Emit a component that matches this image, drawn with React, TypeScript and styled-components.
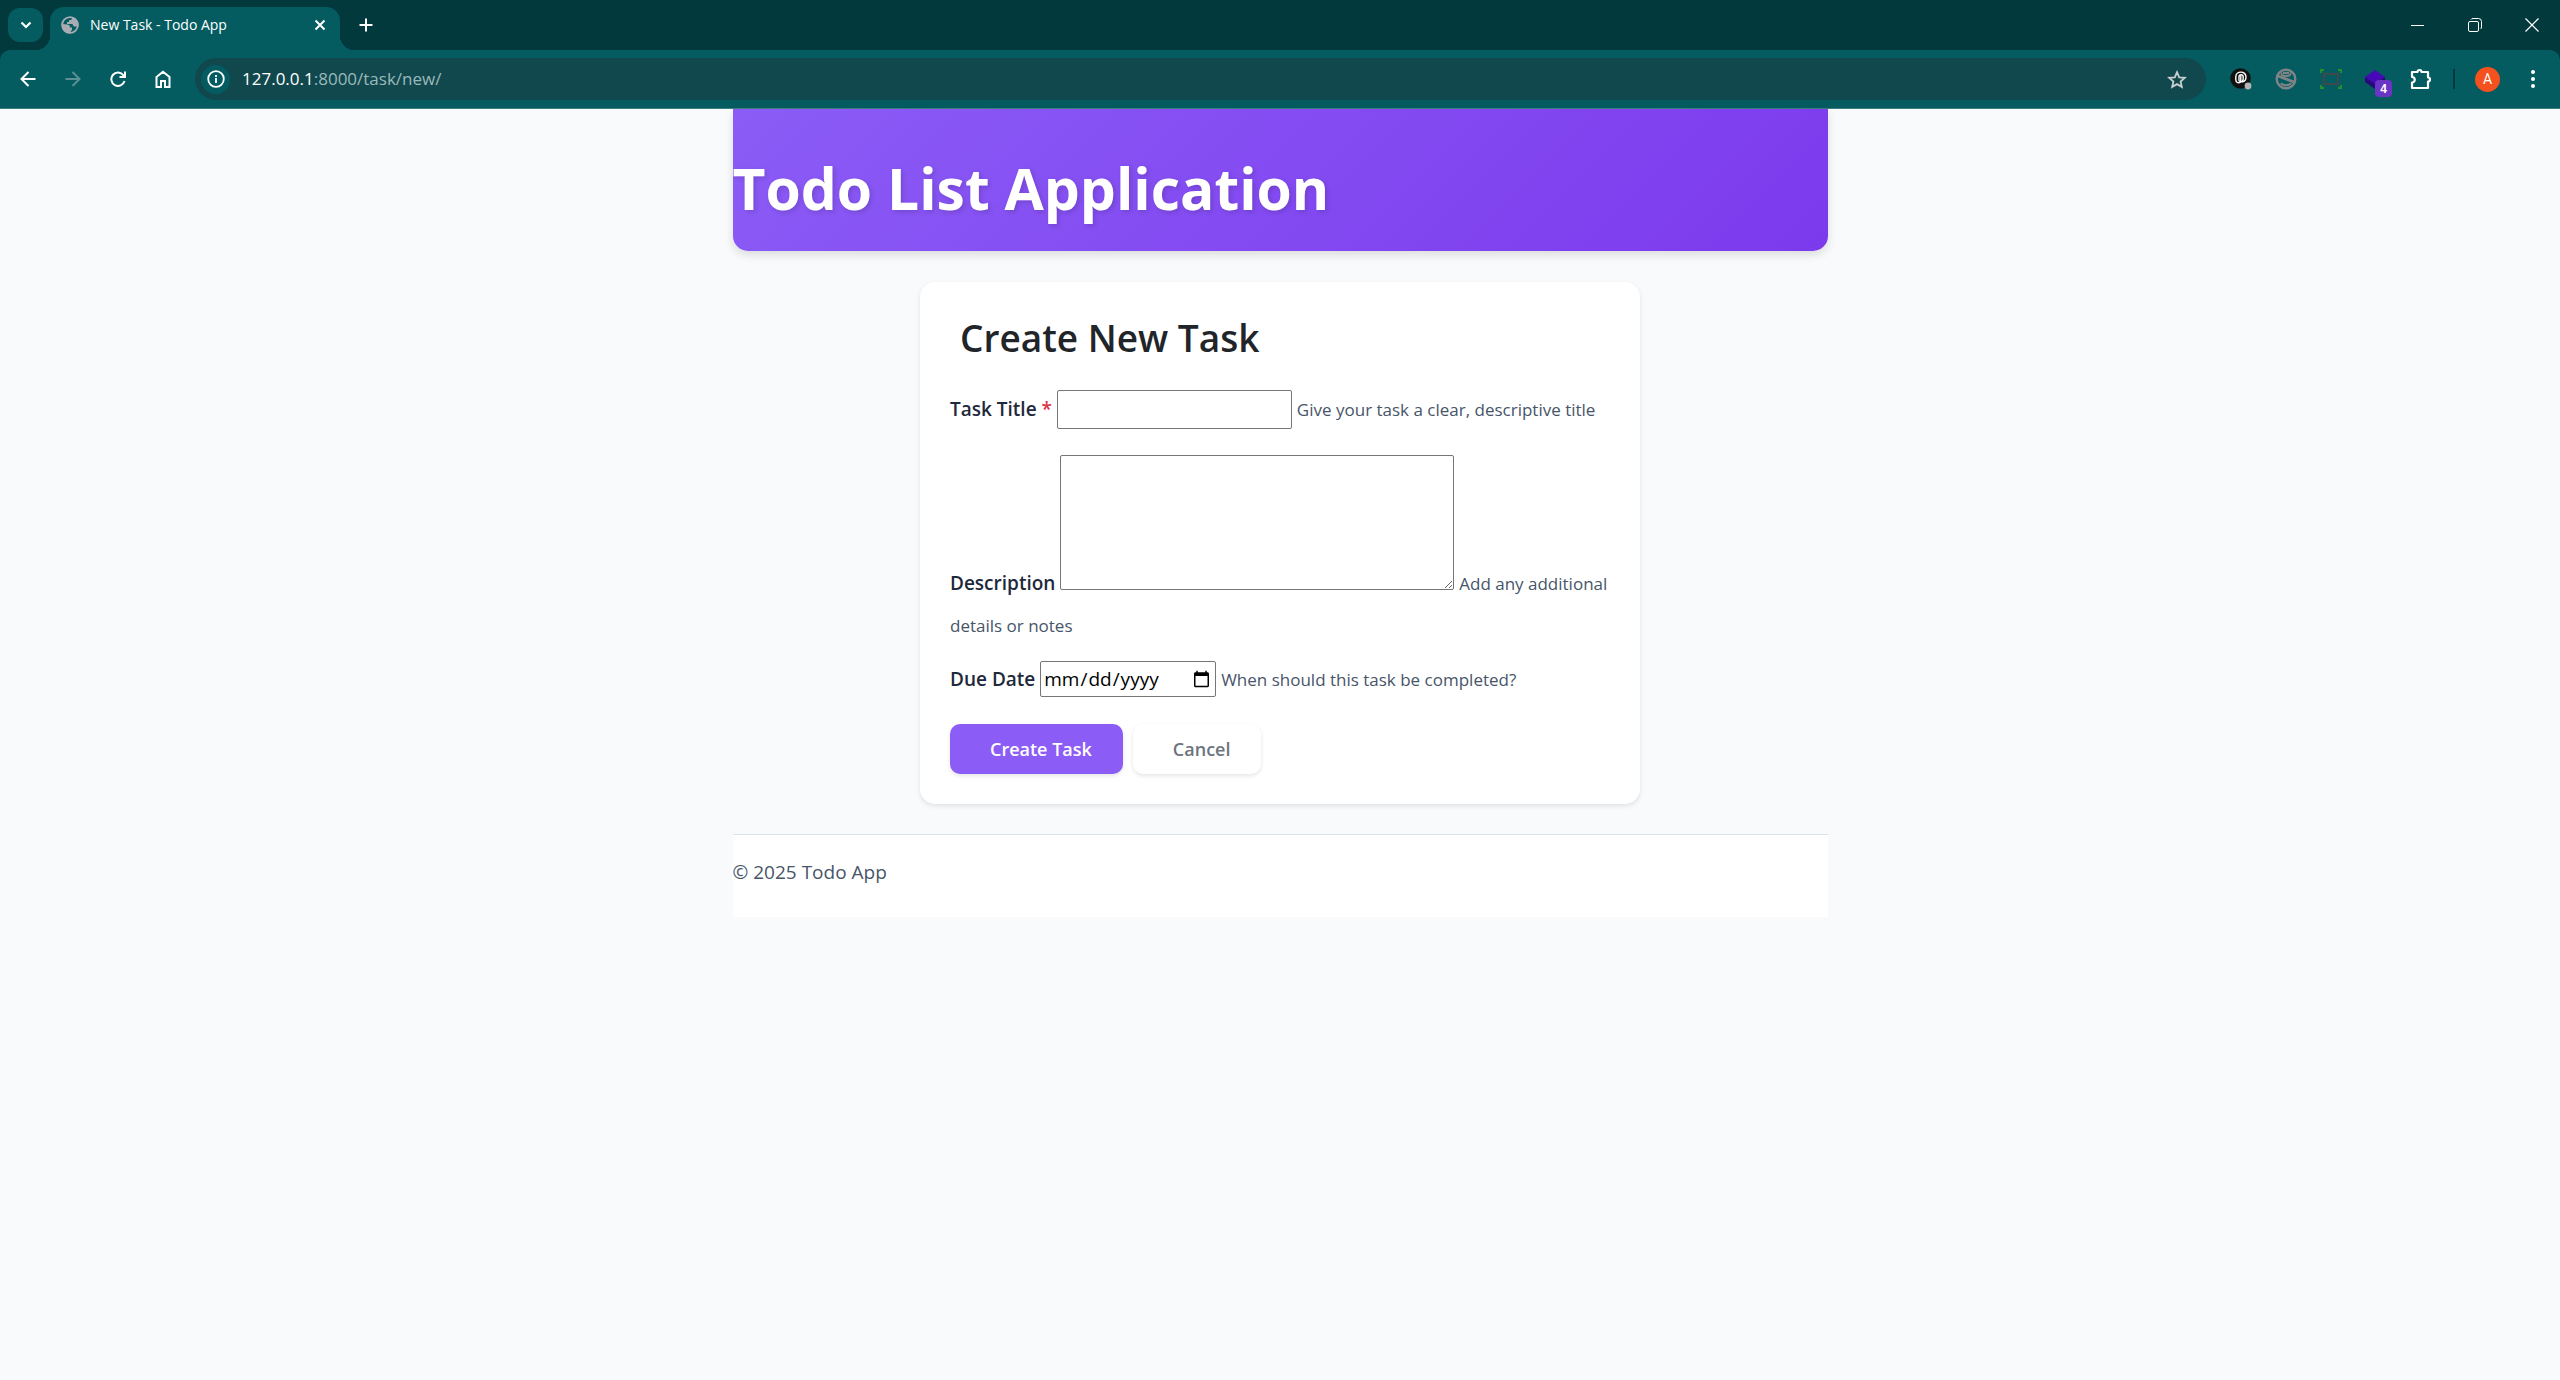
import React from "react";
import styled, { createGlobalStyle } from "styled-components";

const ui = '"Open Sans", "Noto Sans", sans-serif';

const GlobalStyle = createGlobalStyle`
  *, *::before, *::after { box-sizing: border-box; }
  body {
    margin: 0;
    background: #f8fafc;
    color: #212529;
    font-family: ${ui};
    font-size: 19px;
    line-height: 30px;
  }
`;

const TabStrip = styled.div`
  display: flex;
  align-items: center;
  height: 50px;
  padding: 0 0 0 8px;
  background: #01393d;
  color: #fff;
`;

const StripButton = styled.button<{ $filled?: boolean; $w?: number }>`
  display: grid;
  place-items: center;
  width: ${(p) => p.$w ?? 35}px;
  height: 34px;
  padding: 0;
  border: 0;
  border-radius: 12px;
  background: ${(p) => (p.$filled ? "#045c61" : "transparent")};
  color: inherit;
`;

const Tab = styled.div`
  position: relative;
  display: flex;
  align-items: center;
  gap: 11px;
  align-self: flex-end;
  width: 290px;
  height: 43px;
  margin: 0 8px 0 7px;
  padding: 0 8px 7px 11px;
  border-radius: 14px 14px 0 0;
  background: #045c61;
  font-size: 14px;
  line-height: 20px;
  &::before, &::after {
    content: "";
    position: absolute;
    bottom: 0;
    width: 14px;
    height: 14px;
  }
  &::before {
    right: 100%;
    background: radial-gradient(circle at 0 0, transparent 14px, #045c61 14px);
  }
  &::after {
    left: 100%;
    background: radial-gradient(circle at 100% 0, transparent 14px, #045c61 14px);
  }
`;

const TabTitle = styled.span`
  flex: 1;
`;

const CloseTab = styled(StripButton)`
  width: 25px;
  height: 25px;
`;

const Spacer = styled.div`
  flex: 1;
`;

const ToolbarBack = styled.div`
  background: #01393d;
`;

const Toolbar = styled.div`
  display: flex;
  align-items: center;
  height: 59px;
  padding: 0 5px;
  border-bottom: 1px solid #3c7f83;
  border-radius: 10px 10px 0 0;
  background: #045c61;
  color: #fff;
`;

const ToolButton = styled.button<{ $dim?: boolean }>`
  position: relative;
  display: grid;
  place-items: center;
  flex: none;
  width: 45px;
  height: 40px;
  padding: 0;
  border: 0;
  background: transparent;
  color: ${(p) => (p.$dim ? "#5a9093" : "#fff")};
`;

const AddressBar = styled.div`
  display: flex;
  align-items: center;
  flex: 1;
  height: 42px;
  margin: 0 12px 0 10px;
  padding: 0 7px 0 6px;
  border-radius: 21px;
  background: #10484e;
`;

const InfoButton = styled.button`
  display: grid;
  place-items: center;
  width: 29px;
  height: 29px;
  margin-right: 12px;
  padding: 0;
  border: 0;
  border-radius: 50%;
  background: #045c61;
  color: #fff;
`;

const Url = styled.div`
  flex: 1;
  color: #9bb9bb;
  font-size: 17px;
  line-height: 24px;
`;

const Host = styled.span`
  color: #fff;
`;

const StarButton = styled(ToolButton)`
  color: #c8cfd0;
`;

const Count = styled.span`
  position: absolute;
  right: 6px;
  bottom: 2px;
  display: grid;
  place-items: center;
  width: 17px;
  height: 17px;
  border-radius: 4px;
  background: #6a35c4;
  color: #fff;
  font-size: 12px;
  font-weight: 700;
  line-height: 16px;
`;

const Divider = styled.div`
  width: 2px;
  height: 20px;
  margin: 0 10px;
  background: #01393d;
`;

const Avatar = styled.span`
  display: grid;
  place-items: center;
  width: 25px;
  height: 25px;
  border-radius: 50%;
  background: #f4511e;
  color: #fff;
  font-family: Roboto, sans-serif;
  font-size: 14px;
  line-height: 20px;
`;

const Page = styled.div`
  max-width: 1095px;
  margin: 0 auto;
`;

const Header = styled.header`
  padding: 43px 0 27px;
  border-radius: 0 0 15px 15px;
  background: linear-gradient(135deg, #8b5cf6 0%, #7c3aed 100%);
  box-shadow: 0 4px 10px rgba(0, 0, 0, 0.12);
`;

const SiteTitle = styled.h1`
  margin: 0;
  color: #fff;
  font-size: 57px;
  font-weight: 700;
  line-height: 72px;
  text-shadow: 2px 2px 5px rgba(0, 0, 0, 0.15);
`;

const Card = styled.main`
  max-width: 720px;
  margin: 31px auto 30px;
  padding: 30px;
  border-radius: 15px;
  background: #fff;
  box-shadow: 0 2px 5px rgba(0, 0, 0, 0.1);
`;

const CardTitle = styled.h2`
  margin: 0 0 24px;
  padding-left: 10px;
  font-size: 37px;
  font-weight: 600;
  line-height: 52px;
`;

const Field = styled.div`
  margin-bottom: 12px;
  line-height: 42px;
`;

const Label = styled.label`
  color: #1e293b;
  font-weight: 600;
  line-height: 30px;
`;

const Required = styled.span`
  color: #dc3545;
`;

const Help = styled.small`
  color: #475569;
  font-size: 17px;
  line-height: 30px;
`;

const TextInput = styled.input`
  width: 235px;
  height: 39px;
  border: 1px solid #767676;
  border-radius: 2px;
  font: inherit;
`;

const DateInput = styled.input`
  width: 176px;
  height: 36px;
  padding: 1px 2px;
  border: 1px solid #767676;
  border-radius: 2px;
  background: #fff;
  color: #000;
  font: inherit;
  line-height: 30px;
`;

const TextArea = styled.textarea`
  width: 394px;
  height: 135px;
  margin: 13px 0 0;
  border: 1px solid #767676;
  border-radius: 2px;
  font: inherit;
  vertical-align: baseline;
`;

const Actions = styled.div`
  display: flex;
  gap: 10px;
  padding-top: 12px;
`;

const ActionButton = styled.button<{ $primary?: boolean }>`
  height: 50px;
  padding: 0 31px 0 40px;
  border: 0;
  border-radius: 10px;
  background: ${(p) => (p.$primary ? "#8b5cf6" : "#fff")};
  box-shadow: 0 2px 4px rgba(0, 0, 0, 0.1);
  color: ${(p) => (p.$primary ? "#fff" : "#6c757d")};
  font-family: inherit;
  font-size: 18px;
  font-weight: 600;
  line-height: 30px;
`;

const Footer = styled.footer`
  padding: 22px 0 30px;
  border-top: 1px solid #dee2e6;
  background: #fff;
  color: #475569;
`;

const line = { fill: "none", stroke: "currentColor" } as const;

export default function App() {
  return (
    <>
      <GlobalStyle />
      <TabStrip>
        <StripButton $filled aria-label="Search tabs">
          <svg width="12" height="8" viewBox="0 0 12 8" {...line} strokeWidth="2.2"><path d="M1.500 1.500 6 6l4.500-4.500" /></svg>
        </StripButton>
        <Tab>
          <svg width="18" height="18" viewBox="0 0 18 18">
            <circle cx="9" cy="9" r="7.900" fill="#045c61" stroke="#a9adb3" strokeWidth="1.800" />
            <path d="M1 8 6.500 8.500C8.500 8.800 9 10 9 11.500h2V14c-1 .5-1.500 1.500-2 3.500C4 17.500 0 13.500 1 8ZM11 1c.5 2.500-.5 3.200-3 3.200V6H6v2h5c1 0 1 2 2 2.500h4.500C18 5.500 15 1.800 11 1Z" fill="#a9adb3" />
          </svg>
          <TabTitle>New Task - Todo App</TabTitle>
          <CloseTab aria-label="Close tab">
            <svg width="12" height="12" viewBox="0 0 12 12" {...line} strokeWidth="2"><path d="m1.500 1.500 9 9m0-9-9 9" /></svg>
          </CloseTab>
        </Tab>
        <StripButton aria-label="New tab">
          <svg width="14" height="14" viewBox="0 0 14 14" {...line} strokeWidth="2"><path d="M7 .5v13M.5 7h13" /></svg>
        </StripButton>
        <Spacer />
        <StripButton $w={57} aria-label="Minimize">
          <svg width="13" height="13" viewBox="0 0 13 13" {...line}><path d="M0 6.500h13" /></svg>
        </StripButton>
        <StripButton $w={57} aria-label="Restore">
          <svg width="14" height="14" viewBox="0 0 14 14" {...line}><rect x=".5" y="3.500" width="10" height="10" rx="1.500" /><path d="M3 1.500Q3.500.5 5 .5h5.500q3 0 3 3V9q0 1.500-1 2" /></svg>
        </StripButton>
        <StripButton $w={57} aria-label="Close">
          <svg width="14" height="14" viewBox="0 0 14 14" {...line} strokeWidth="1.200"><path d="m.5.5 13 13m0-13-13 13" /></svg>
        </StripButton>
      </TabStrip>
      <ToolbarBack>
        <Toolbar>
          <ToolButton aria-label="Back">
            <svg width="16" height="16" viewBox="0 0 16 16" {...line} strokeWidth="2"><path d="M15.500 8H2M8.500 1 1.500 8l7 7" /></svg>
          </ToolButton>
          <ToolButton $dim aria-label="Forward">
            <svg width="16" height="16" viewBox="0 0 16 16" {...line} strokeWidth="2"><path d="M.5 8H14M7.500 1l7 7-7 7" /></svg>
          </ToolButton>
          <ToolButton aria-label="Reload">
            <svg width="16" height="16" viewBox="0 0 16 16" {...line} strokeWidth="2"><path d="M14.500 10A6.700 6.700 0 1 1 13.500 4.300l1 1.200M15 .5V6H9.500" /></svg>
          </ToolButton>
          <ToolButton aria-label="Home">
            <svg width="16" height="18" viewBox="0 0 16 18" {...line} strokeWidth="2"><path d="M1.500 7 8 1.800 14.500 7v10H10v-6H6v6H1.500Z" /></svg>
          </ToolButton>
          <AddressBar>
            <InfoButton aria-label="Site information">
              <svg width="18" height="18" viewBox="0 0 18 18" {...line} strokeWidth="1.800"><circle cx="9" cy="9" r="7.800" /><path d="M9 8v5M9 5v2" /></svg>
            </InfoButton>
            <Url><Host>127.0.0.1</Host>:8000/task/new/</Url>
            <StarButton aria-label="Bookmark this page">
              <svg width="20" height="19" viewBox="0 0 20 19" {...line} strokeWidth="1.800"><path d="m10 2.200 2.200 5.100 5.600.5-4.200 3.700 1.200 5.400L10 14.100l-4.800 2.800 1.200-5.400-4.200-3.700 5.600-.5Z" /></svg>
            </StarButton>
          </AddressBar>
          <ToolButton aria-label="Pinned extension">
            <svg width="22" height="22" viewBox="0 0 22 22">
              <circle cx="10.500" cy="10.500" r="10.300" fill="#111" />
              <path d="M10.800 8.500v3.700c0 1.300-1.800 1.300-1.800 0V9c0-3 4.200-3 4.200 0v1.500c0 4-7.400 6.500-7.400 1V9c0-6.500 10.200-6.500 10.200 0 0 3-1.500 4.500-3.500 4.800" fill="none" stroke="#fff" strokeWidth="1.400" strokeLinecap="round" />
              <circle cx="18" cy="18" r="3.400" fill="#b4b4b4" />
            </svg>
          </ToolButton>
          <ToolButton aria-label="Script blocker">
            <svg width="22" height="22" viewBox="0 0 22 22" fill="none" stroke="#808486">
              <circle cx="11" cy="11" r="9.300" strokeWidth="2.400" />
              <path d="M3 8 19 14" strokeWidth="2.800" />
              <path d="M6.500 4.500c-.5 3 1.500 3.500 4.500 3.500s5-.5 4.500-3.500M8 5h6M6 15c1.500 3 8.500 3 10 0" strokeWidth="1.800" />
            </svg>
          </ToolButton>
          <ToolButton aria-label="Window resizer">
            <svg width="22" height="20" viewBox="0 0 22 20" fill="none">
              <path d="M1 4V1h3M18 1h3v3M21 16v3h-3M4 19H1v-3" stroke="#2f8f2d" strokeWidth="1.800" />
              <rect x="4" y="5" width="14" height="10" stroke="#40484a" strokeWidth="2" />
            </svg>
          </ToolButton>
          <ToolButton aria-label="Layers, 4 items">
            <svg width="22" height="20" viewBox="0 0 22 20"><path d="M0 8v5l10 7 10-7V8Z" fill="#250a78" /><path d="M0 8 10 1l10 7-10 7Z" fill="#4709b5" /></svg>
            <Count>4</Count>
          </ToolButton>
          <ToolButton aria-label="Extensions">
            <svg width="22" height="22" viewBox="0 0 22 22" {...line} strokeWidth="2.200"><path d="M2 4h5.500a2 2 0 0 1 4 0H18v5.500a2 2 0 0 1 0 4V20H2v-5.500a2.700 2.700 0 0 0 0-5.500Z" strokeLinejoin="round" /></svg>
          </ToolButton>
          <Divider />
          <ToolButton aria-label="Profile"><Avatar>A</Avatar></ToolButton>
          <ToolButton aria-label="Menu">
            <svg width="4" height="18" viewBox="0 0 4 18" fill="#fff"><circle cx="2" cy="2" r="2" /><circle cx="2" cy="9" r="2" /><circle cx="2" cy="16" r="2" /></svg>
          </ToolButton>
        </Toolbar>
      </ToolbarBack>
      <Page>
        <Header><SiteTitle>Todo List Application</SiteTitle></Header>
        <Card>
          <CardTitle>Create New Task</CardTitle>
          <form>
            <Field>
              <Label htmlFor="title">Task Title <Required>*</Required></Label>{" "}
              <TextInput id="title" type="text" />{" "}
              <Help>Give your task a clear, descriptive title</Help>
            </Field>
            <Field>
              <Label htmlFor="description">Description</Label>{" "}
              <TextArea id="description" />{" "}
              <Help>Add any additional details or notes</Help>
            </Field>
            <Field>
              <Label htmlFor="due">Due Date</Label>{" "}
              <DateInput id="due" type="date" />{" "}
              <Help>When should this task be completed?</Help>
            </Field>
            <Actions>
              <ActionButton $primary type="submit">Create Task</ActionButton>
              <ActionButton type="button">Cancel</ActionButton>
            </Actions>
          </form>
        </Card>
        <Footer>© 2025 Todo App</Footer>
      </Page>
    </>
  );
}
